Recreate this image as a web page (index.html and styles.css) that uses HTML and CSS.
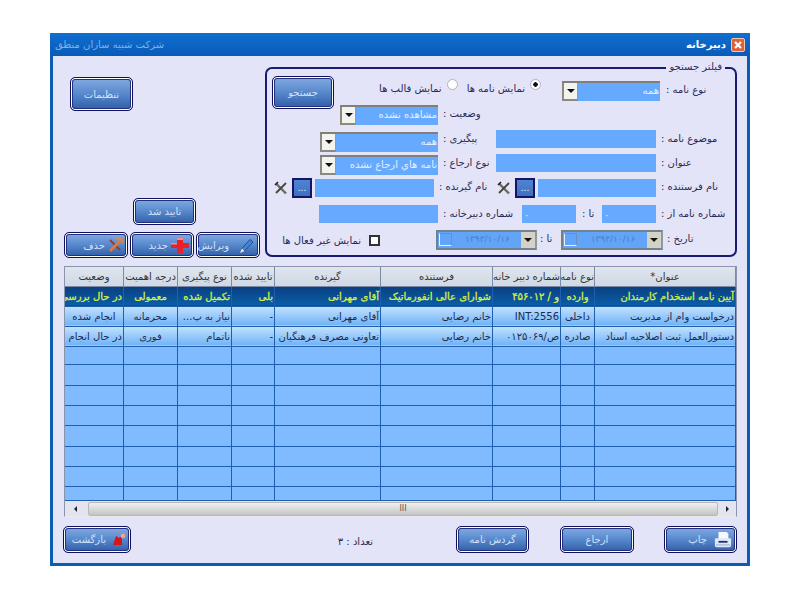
FILE: index.html
```html
<!DOCTYPE html>
<html lang="fa" dir="rtl">
<head>
    <meta charset="UTF-8">
    <title>دبیرخانه</title>
    <link rel="stylesheet" href="styles.css">
</head>
<body>
<div class="window">
    <div class="titlebar">
        <span class="close-btn"><svg width="12" height="12" viewBox="0 0 12 12"><path d="M3 3l6 6M9 3l-6 6" stroke="#fff" stroke-width="2.2"/></svg></span>
        <span class="title-main">دبیرخانه</span>
        <span class="title-company">شرکت شبیه سازان منطق</span>
    </div>

    <div class="content">
        <div class="top-area">
            <div class="filter">
                <span class="legend">فیلتر جستجو</span>
                <div class="filter-top">
                    <div class="top-rows">
                        <div class="row row-first">
                            <label class="lbl lbl-first">نوع نامه :</label>
                            <div class="combo combo-98"><span class="combo-text">همه</span><span class="arrow"></span></div>
                            <span class="radio radio-on"></span>
                            <span class="opt">نمایش نامه ها</span>
                            <span class="radio"></span>
                            <span class="opt">نمایش قالب ها</span>
                        </div>
                        <div class="row row-status">
                            <label class="lbl lbl-status">وضعیت :</label>
                            <div class="combo combo-98"><span class="combo-text">مشاهده نشده</span><span class="arrow"></span></div>
                        </div>
                    </div>
                    <button class="btn btn-search">جستجو</button>
                </div>

                <div class="row">
                    <label class="lbl lbl-a">موضوع نامه :</label>
                    <input class="field field-160">
                    <label class="lbl lbl-b">پیگیری :</label>
                    <div class="combo combo-118 push-2"><span class="combo-text">همه</span><span class="arrow"></span></div>
                </div>
                <div class="row">
                    <label class="lbl lbl-a">عنوان :</label>
                    <input class="field field-160">
                    <label class="lbl lbl-b">نوع ارجاع :</label>
                    <div class="combo combo-118 push-1"><span class="combo-text">نامه هاي ارجاع نشده</span><span class="arrow"></span></div>
                </div>
                <div class="row row-tall">
                    <label class="lbl lbl-a">نام فرستنده :</label>
                    <input class="field field-118 push-1">
                    <button class="btn-pick">...</button>
                    <svg class="tool-x" width="14" height="14" viewBox="0 0 14 14"><path d="M2 2.5l10 10" stroke="#6b6b60" stroke-width="2.4"/><path d="M12 2L2 12" stroke="#44443c" stroke-width="1.8"/><path d="M1 4l3-3" stroke="#222" stroke-width="1.6"/></svg>
                    <label class="lbl lbl-c">نام گیرنده :</label>
                    <input class="field field-119 push-1">
                    <button class="btn-pick">...</button>
                    <svg class="tool-x" width="14" height="14" viewBox="0 0 14 14"><path d="M2 2.5l10 10" stroke="#6b6b60" stroke-width="2.4"/><path d="M12 2L2 12" stroke="#44443c" stroke-width="1.8"/><path d="M1 4l3-3" stroke="#222" stroke-width="1.6"/></svg>
                </div>
                <div class="row row-mid">
                    <label class="lbl lbl-a">شماره نامه از :</label>
                    <input class="field field-54" value="۰">
                    <label class="lbl lbl-to">تا :</label>
                    <input class="field field-54" value="۰">
                    <label class="lbl lbl-d">شماره دبیرخانه :</label>
                    <input class="field field-119">
                </div>
                <div class="row">
                    <label class="lbl lbl-date">تاریخ :</label>
                    <div class="date date-102"><span class="arrow"></span><span class="date-text">۱۳۹۳/۱۰/۱۶</span><span class="date-check"></span></div>
                    <label class="lbl lbl-to2">تا :</label>
                    <div class="date date-101"><span class="arrow"></span><span class="date-text">۱۳۹۳/۱۰/۱۶</span><span class="date-check"></span></div>
                    <span class="check"></span>
                    <span class="opt">نمایش غیر فعال ها</span>
                </div>
            </div>

            <div class="side">
                <button class="btn btn-settings">تنظیمات</button>
                <button class="btn btn-confirm">تایید شد</button>
                <div class="side-actions">
                    <button class="btn btn-action btn-edit"><svg width="17" height="17" viewBox="0 0 17 17"><path d="M4 11.500l8-9 3 2.500-8.500 9z" fill="#3f86d8" stroke="#17407c" stroke-width=".8"/><path d="M4 11.500l2.500 2.500-4.500 2z" fill="#f4ead2"/></svg>ویرایش</button>
                    <button class="btn btn-action"><svg width="18" height="16" viewBox="0 0 18 16"><path d="M6 1h6v5h6v5h-6v5H6v-5H0V6h6z" fill="#e8202a"/><path d="M6 1h6v2H6zM0 6h6v1.500H0z" fill="#f98a8a"/></svg>جدید</button>
                    <button class="btn btn-action"><svg width="15" height="14" viewBox="0 0 15 14"><path d="M2 2l10 10" stroke="#a8341a" stroke-width="1.800"/><path d="M13 2L2 13" stroke="#e8792b" stroke-width="2.600"/><path d="M8 1h6v4" fill="none" stroke="#e8892b" stroke-width="1.600"/></svg>حذف</button>
                </div>
            </div>
        </div>

        <div class="grid-box">
            <table class="grid">
                <colgroup>
                    <col class="c-title"><col class="c-type"><col class="c-num"><col class="c-from"><col class="c-to"><col class="c-ok"><col class="c-follow"><col class="c-rank"><col class="c-state">
                </colgroup>
                <thead>
                    <tr>
                        <th>عنوان*</th><th>نوع نامه</th><th>شماره دبیر خانه</th><th>فرستنده</th><th>گیرنده</th><th>تایید شده</th><th>نوع پیگیری</th><th>درجه اهمیت</th><th>وضعیت</th>
                    </tr>
                </thead>
                <tbody>
                    <tr class="selected">
                        <td>آیین نامه استخدام کارمندان</td><td class="mid">وارده</td><td>و / ۴۵۶۰۱۲</td><td>شوارای عالی انفورماتیک</td><td>آقای مهرانی</td><td>بلی</td><td>تکمیل شده</td><td class="mid">معمولی</td><td>در حال بررسی</td>
                    </tr>
                    <tr class="filled">
                        <td>درخواست وام از مدیریت</td><td class="mid">داخلی</td><td>INT:2556</td><td>خانم رضایی</td><td>آقای مهرانی</td><td>-</td><td>نیاز به پ...</td><td class="mid">محرمانه</td><td class="mid">انجام شده</td>
                    </tr>
                    <tr class="filled">
                        <td>دستورالعمل ثبت اصلاحیه اسناد</td><td class="mid">صادره</td><td>ص/۰۱۲۵۰۶۹</td><td>خانم رضایی</td><td>تعاونی مصرف فرهنگیان</td><td>-</td><td>ناتمام</td><td class="mid">فوری</td><td>در حال انجام</td>
                    </tr>
                    <tr class="short"><td></td><td></td><td></td><td></td><td></td><td></td><td></td><td></td><td></td></tr>
                    <tr class="wide"><td></td><td></td><td></td><td></td><td></td><td></td><td></td><td></td><td></td></tr>
                    <tr><td></td><td></td><td></td><td></td><td></td><td></td><td></td><td></td><td></td></tr>
                    <tr><td></td><td></td><td></td><td></td><td></td><td></td><td></td><td></td><td></td></tr>
                    <tr class="wide"><td></td><td></td><td></td><td></td><td></td><td></td><td></td><td></td><td></td></tr>
                    <tr><td></td><td></td><td></td><td></td><td></td><td></td><td></td><td></td><td></td></tr>
                    <tr><td></td><td></td><td></td><td></td><td></td><td></td><td></td><td></td><td></td></tr>
                    <tr class="tail"><td></td><td></td><td></td><td></td><td></td><td></td><td></td><td></td><td></td></tr>
                </tbody>
            </table>
            <div class="hscroll">
                <span class="scroll-btn scroll-right"></span>
                <div class="scroll-thumb"><span class="grip">III</span></div>
                <span class="scroll-btn scroll-left"></span>
            </div>
        </div>

        <div class="footer">
            <button class="btn btn-foot btn-print"><svg width="18" height="18" viewBox="0 0 20 20"><path d="M5 1h9l2 2v6H5z" fill="#f6f8fd"/><path d="M1 9q0-1 1-1h16q1 0 1 1v7q0 2-2 2H3q-2 0-2-2z" fill="#dfe7f5"/><path d="M5 11h10v2H5z" fill="#1d2c78"/><path d="M2 15h16v1H2z" fill="#8fa6cc"/></svg>چاپ</button>
            <button class="btn btn-foot btn-refer">ارجاع</button>
            <button class="btn btn-foot btn-flow">گردش نامه</button>
            <span class="count">تعداد : ۳</span>
            <button class="btn btn-foot btn-back"><svg width="14" height="14" viewBox="0 0 14 14"><path d="M4 3l3 2 3-2v9H1z" fill="#d8141c"/><circle cx="11" cy="3" r="2.400" fill="#f6a08c"/></svg>بازگشت</button>
        </div>
    </div>
</div>
</body>
</html>
```

FILE: styles.css
```css
body {
    margin: 0;
    background: #fff;
    font-family: "DejaVu Sans", sans-serif;
    font-size: 10px;
    color: #2a2a55;
}

.window {
    width: 700px;
    height: 533px;
    margin: 33px 50px 0;
    box-sizing: border-box;
    border: 3px solid #0b5cb5;
    border-top: 0;
    background: #e4e4f8;
    display: flex;
    flex-direction: column;
}

.titlebar {
    height: 23px;
    margin: 0 -3px;
    padding: 0 5px;
    background: linear-gradient(#0f6fd0, #0a5ab8);
    display: flex;
    align-items: center;
}
.close-btn {
    width: 12px;
    height: 12px;
    background: #e0603a;
    border: 1px solid #f5c9a8;
    border-radius: 2px;
    margin-left: 5px;
    display: flex;
}
.title-main {
    color: #fff;
    font-weight: bold;
}
.title-company {
    margin-right: auto;
    color: #7fb2ea;
}

.content {
    flex: 1;
    padding: 11px 10px 0 11px;
}

.top-area {
    display: flex;
    height: 190px;
}

/* filter box */
.filter {
    position: relative;
    box-sizing: border-box;
    width: 472px;
    height: 190px;
    border: 2px solid #1a1a70;
    border-radius: 7px;
    padding-top: 7px;
}
.legend {
    position: absolute;
    top: -8px;
    right: 10px;
    padding: 0 3px;
    background: #e4e4f8;
    color: #2a2a66;
}
.filter-top {
    display: flex;
    height: 54px;
}
.top-rows {
    flex: 1;
    padding-top: 5px;
}
.btn-search {
    width: 62px;
    height: 33px;
    margin-left: 5px;
}

.row {
    display: flex;
    height: 24px;
}
.row-status { height: 21px; }
.row-tall { height: 27px; }
.row-mid { height: 25px; }
.push-1 { margin-top: 1px; }
.push-2 { margin-top: 2px; }

/* labels sit against the control on their left */
.lbl {
    box-sizing: border-box;
    padding: 2px 0 0 5px;
    line-height: 13px;
    text-align: left;
    white-space: nowrap;
}
.lbl-first { width: 75px; padding-left: 6px; }
.lbl-status { width: 44px; margin-right: 253px; }
.lbl-a { width: 79px; }
.lbl-b { width: 58px; }
.lbl-c { width: 61px; }
.lbl-to { width: 26px; padding-left: 6px; }
.lbl-d { width: 84px; }
.lbl-date { width: 72px; padding-left: 4px; }
.lbl-to2 { width: 24px; padding-left: 3px; }

.field {
    box-sizing: border-box;
    height: 18px;
    padding: 0 2px;
    border: 0;
    background: #66aaff;
    color: #e8f1ff;
    font: 10px "DejaVu Sans", sans-serif;
    text-align: left;
}
.field-160 { width: 160px; }
.field-118 { width: 118px; }
.field-119 { width: 119px; }
.field-54 { width: 54px; }

.combo {
    box-sizing: border-box;
    height: 20px;
    display: flex;
    background: #66aaff;
    border-top: 2px solid #807f78;
}
.combo-98 { width: 98px; }
.combo-118 { width: 118px; }
.combo-text {
    flex: 1;
    overflow: hidden;
    white-space: nowrap;
    padding: 2px 1px 0 0;
    color: #e4eeff;
}
.arrow {
    position: relative;
    width: 16px;
    box-sizing: border-box;
    background: #f4f4ee;
    border-style: solid;
    border-width: 0 1px 2px 2px;
    border-color: #b0b0a8 #9a9a90 #8a8a80 #8a8a80;
    flex-shrink: 0;
}
.arrow::after {
    content: "";
    position: absolute;
    top: 6px;
    left: 3px;
    border: 4px solid transparent;
    border-top: 4px solid #111;
    border-bottom: 0;
}

.radio {
    box-sizing: border-box;
    width: 11px;
    height: 11px;
    margin: -2px 9px 0 5px;
    border-radius: 50%;
    background: #fff;
    border: 1px solid #b0b0c8;
}
.radio-on {
    margin-right: 21px;
    background: radial-gradient(#111 0 2px, #fff 2.500px);
}
.opt {
    line-height: 13px;
    white-space: nowrap;
    padding-top: 1px;
}

.btn-pick {
    box-sizing: border-box;
    width: 20px;
    height: 20px;
    margin: 0 3px;
    padding: 0;
    border: 2px solid #14146a;
    background: linear-gradient(#4f83d0, #3f70c0);
    color: #e6eeff;
    font-size: 10px;
    line-height: 16px;
}
.tool-x {
    margin: 3px 1px 0 2px;
}

.date {
    box-sizing: border-box;
    height: 20px;
    display: flex;
    align-items: stretch;
    background: #62a5f8;
    border: 2px solid #71828a;
    border-right-color: #8c9aa0;
}
.date-102 { width: 102px; }
.date-101 { width: 101px; }
.date .arrow {
    width: 14px;
    background: #d4d2c4;
    border: 0;
}
.date .arrow::after { left: 3px; top: 6px; }
.date-text {
    flex: 1;
    direction: ltr;
    text-align: center;
    color: #4a7fc4;
    font-size: 9px;
    line-height: 15px;
    white-space: nowrap;
    overflow: hidden;
}
.date-check {
    box-sizing: border-box;
    width: 13px;
    height: 13px;
    margin: 1px 2px 1px 1px;
    border: 1px solid;
    border-color: #6f8fb8 #6f8fb8 #e6f0fa #e6f0fa;
    background: #62a5f8;
}
.check {
    box-sizing: border-box;
    width: 11px;
    height: 11px;
    margin: 5px 56px 0 8px;
    border: 2px solid #333;
    background: #fff;
}
.check + .opt { padding-top: 4px; }

/* buttons */
.btn {
    box-sizing: border-box;
    padding: 0;
    border: 1px solid #10105e;
    border-radius: 5px;
    box-shadow: inset 0 0 0 1px #fff, inset 0 0 0 2px #20307c;
    background: linear-gradient(#7ea6de 2px, #5b8ccf 45%, #2f5ca6);
    color: #d4e2fb;
    font: 10px "DejaVu Sans", sans-serif;
    display: flex;
    align-items: center;
    justify-content: center;
    gap: 5px;
}

/* left column beside the filter */
.side {
    flex: 1;
    direction: ltr;
    display: flex;
    flex-direction: column;
    align-items: flex-start;
}
.btn-settings {
    width: 63px;
    height: 34px;
    margin: 10px 0 0 6px;
}
.btn-confirm {
    width: 63px;
    height: 27px;
    margin: auto 0 7px 69px;
}
.side-actions {
    display: flex;
    flex-direction: row-reverse;
    gap: 2px;
    margin-bottom: -1px;
}
.btn-action {
    width: 64px;
    height: 26px;
    direction: rtl;
    justify-content: flex-start;
    padding-right: 4px;
    gap: 3px;
}
.btn-action.btn-edit { gap: 9px; }

/* table */
.grid-box {
    margin-top: 9px;
    height: 251px;
    box-sizing: border-box;
    border: 1px solid #8a94ac;
    border-bottom-color: #e8e8f0;
    overflow: hidden;
}
.grid {
    width: 671px;
    table-layout: fixed;
    border-collapse: collapse;
    background: #80bbff;
}
.c-title { width: 141px; }
.c-type { width: 34px; }
.c-num { width: 68px; }
.c-from { width: 112px; }
.c-to { width: 106px; }
.c-ok { width: 43px; }
.c-follow { width: 54px; }
.c-rank { width: 54px; }
.c-state { width: 59px; }

.grid th {
    box-sizing: border-box;
    height: 19px;
    padding: 0;
    background: linear-gradient(#dfe5ee, #cfd8e4);
    border: 1px solid #7b8aa6;
    border-top: 0;
    font-weight: normal;
    color: #333;
    overflow: hidden;
    white-space: nowrap;
    text-align: center;
}
.grid td {
    box-sizing: border-box;
    height: 20px;
    padding: 0 1px;
    border: 1px solid #1f5fb0;
    color: #1c2a50;
    overflow: hidden;
    white-space: nowrap;
    text-align: right;
}
.grid td.mid { text-align: center; }
.grid tr.short td { height: 18px; }
.grid tr.wide td { height: 21px; }
.grid tr.tail td { height: 14px; }
.grid tr.selected td {
    background: linear-gradient(#0a3f80, #0a5ea8);
    color: #d8f040;
    -webkit-text-stroke: .3px #d8f040;
}
.grid tr.filled td {
    background: linear-gradient(#c4e2ff, #6fb2f6);
}

.hscroll {
    height: 14px;
    margin-top: 1px;
    display: flex;
    background: #e4e4f0;
}
.scroll-btn {
    position: relative;
}
.scroll-right { width: 18px; }
.scroll-left { width: 23px; }
.scroll-btn::after {
    content: "";
    position: absolute;
    top: 4px;
    left: 6px;
    border: 3px solid transparent;
}
.scroll-right::after { border-left-color: #222; left: 8px; }
.scroll-left::after { border-right-color: #222; }
.scroll-thumb {
    flex: 1;
    box-sizing: border-box;
    border: 1px solid #b8b8b8;
    border-radius: 2px;
    background: linear-gradient(#f0f0f0, #c4c4c4);
    text-align: center;
    font-size: 8px;
    line-height: 12px;
    color: #555;
}

/* footer */
.footer {
    display: flex;
    padding-top: 9px;
}
.btn-foot {
    height: 27px;
}
.btn-print {
    width: 73px;
    justify-content: flex-start;
    padding-right: 4px;
    gap: 7px;
}
.btn-refer { width: 74px; margin-right: 30px; }
.btn-flow { width: 73px; margin-right: 31px; }
.count {
    margin: 10px 83px 0 0;
    white-space: nowrap;
}
.btn-back {
    width: 68px;
    margin-right: auto;
    margin-left: -1px;
    justify-content: flex-start;
    padding-right: 4px;
    gap: 6px;
}
```
